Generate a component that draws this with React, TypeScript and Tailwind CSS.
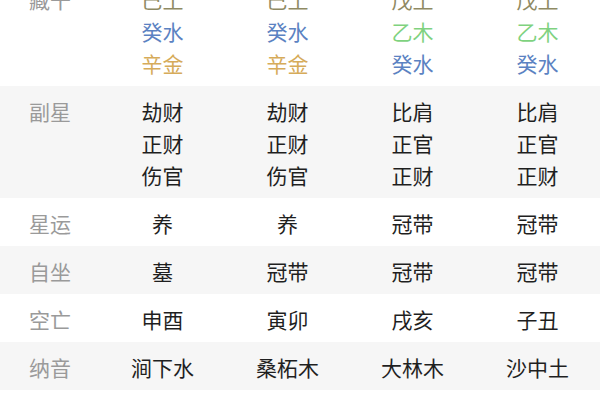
import React from "react";

type Cell = { t: string; c?: string };

const EARTH = "text-[#8f8a63]";
const WATER = "text-[#5b82c2]";
const METAL = "text-[#d6ab5a]";
const WOOD = "text-[#7fd27f]";

const MULTI: { label: string; cols: Cell[][]; bg: string }[] = [
  {
    label: "藏干",
    bg: "bg-white",
    cols: [
      [{ t: "巳土", c: EARTH }, { t: "癸水", c: WATER }, { t: "辛金", c: METAL }],
      [{ t: "巳土", c: EARTH }, { t: "癸水", c: WATER }, { t: "辛金", c: METAL }],
      [{ t: "戊土", c: EARTH }, { t: "乙木", c: WOOD }, { t: "癸水", c: WATER }],
      [{ t: "戊土", c: EARTH }, { t: "乙木", c: WOOD }, { t: "癸水", c: WATER }],
    ],
  },
  {
    label: "副星",
    bg: "bg-[#f6f6f6]",
    cols: [
      [{ t: "劫财" }, { t: "正财" }, { t: "伤官" }],
      [{ t: "劫财" }, { t: "正财" }, { t: "伤官" }],
      [{ t: "比肩" }, { t: "正官" }, { t: "正财" }],
      [{ t: "比肩" }, { t: "正官" }, { t: "正财" }],
    ],
  },
];

const SINGLE: { label: string; vals: string[]; bg: string }[] = [
  { label: "星运", vals: ["养", "养", "冠带", "冠带"], bg: "bg-white" },
  { label: "自坐", vals: ["墓", "冠带", "冠带", "冠带"], bg: "bg-[#f6f6f6]" },
  { label: "空亡", vals: ["申酉", "寅卯", "戌亥", "子丑"], bg: "bg-white" },
  { label: "纳音", vals: ["涧下水", "桑柘木", "大林木", "沙中土"], bg: "bg-[#f6f6f6]" },
];

export default function App() {
  return (
    <div className="w-[600px] h-[400px] overflow-hidden bg-white font-['Noto_Sans_CJK_SC','Noto_Sans',sans-serif] text-[21px] text-[#1f1f1f]">
      <div className="-mt-[26px]">
        {MULTI.map((row) => (
          <div
            key={row.label}
            className={`grid grid-cols-[100px_repeat(4,125px)] pt-[9px] pb-[7px] leading-[32px] ${row.bg}`}
          >
            <div className="text-center text-[#9a9a9a]">{row.label}</div>
            {row.cols.map((col, i) => (
              <div key={i} className="flex flex-col items-center">
                {col.map((cell, j) => (
                  <span key={j} className={cell.c}>
                    {cell.t}
                  </span>
                ))}
              </div>
            ))}
          </div>
        ))}
        {SINGLE.map((row) => (
          <div
            key={row.label}
            className={`grid grid-cols-[100px_repeat(4,125px)] h-12 pt-[3px] items-center ${row.bg}`}
          >
            <div className="text-center text-[#9a9a9a]">{row.label}</div>
            {row.vals.map((v, i) => (
              <div key={i} className="text-center">
                {v}
              </div>
            ))}
          </div>
        ))}
      </div>
    </div>
  );
}
